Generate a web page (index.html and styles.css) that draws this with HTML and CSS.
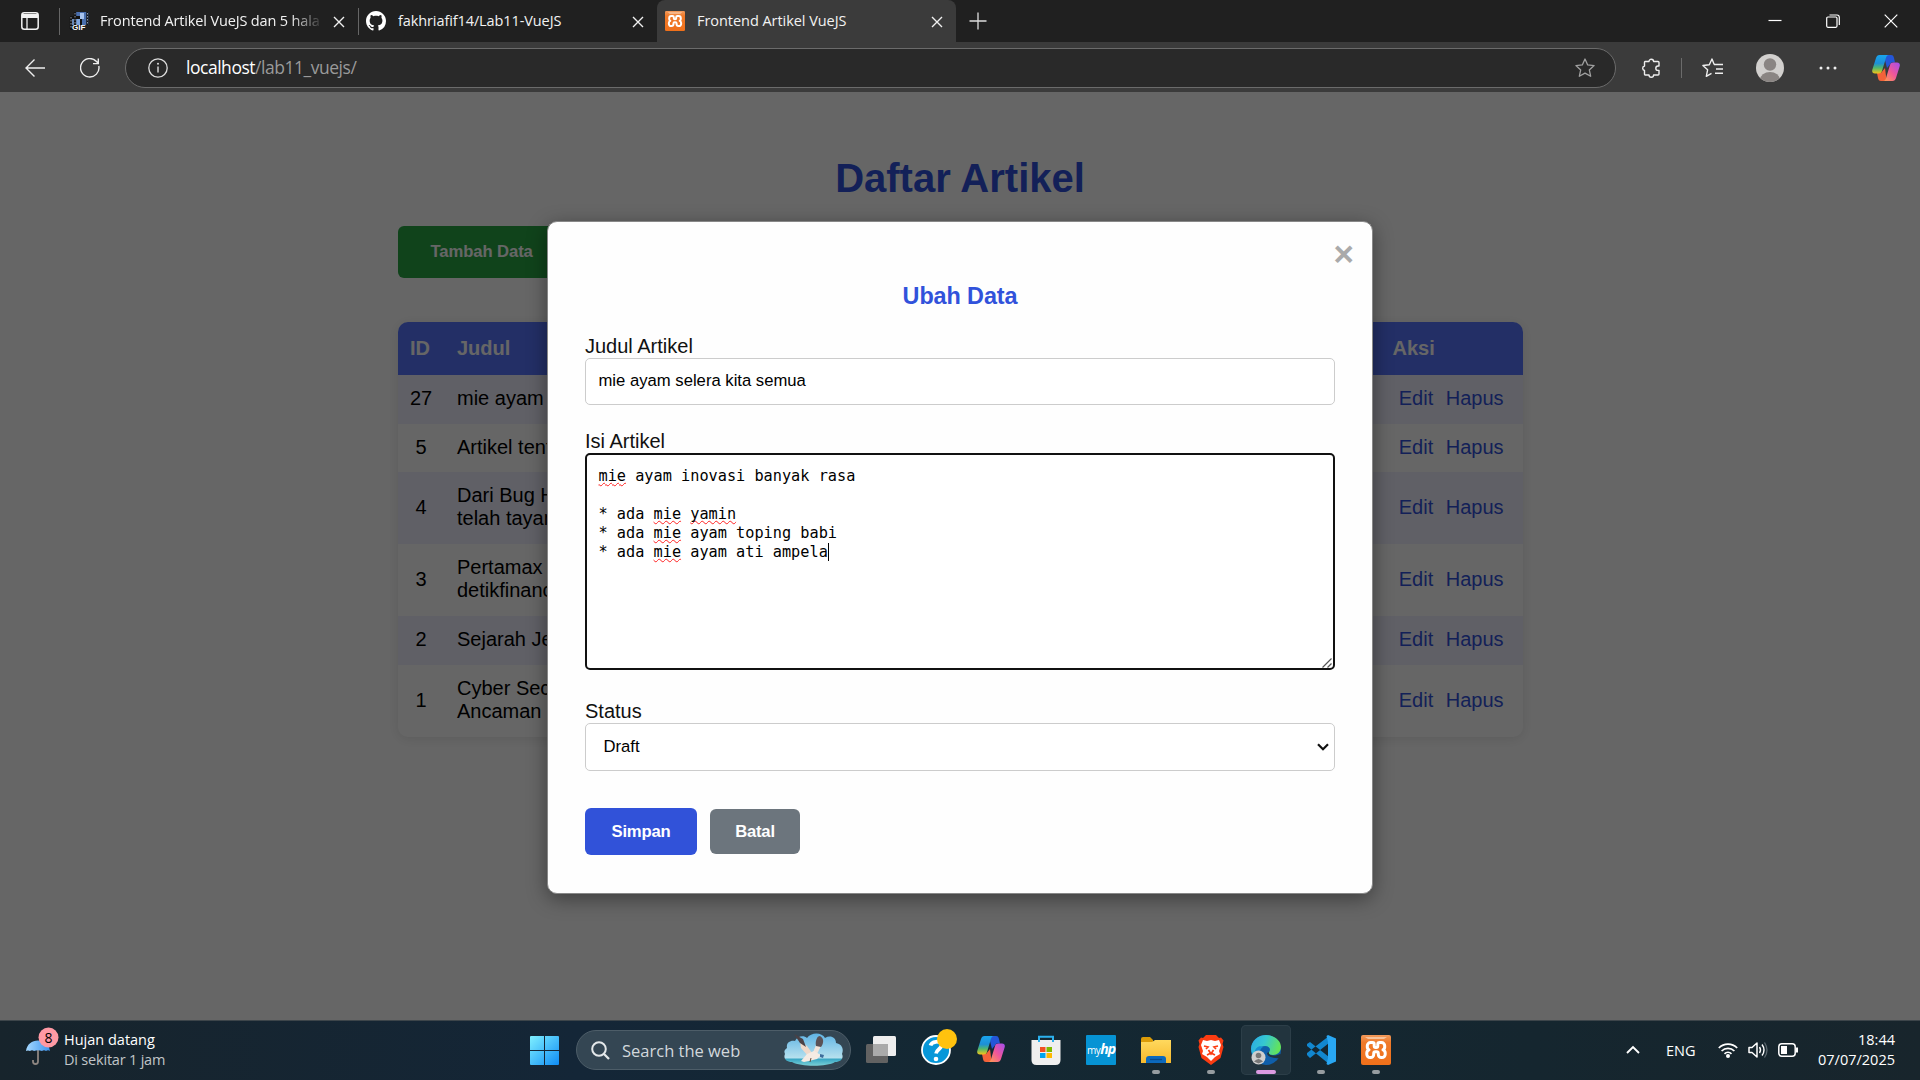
FILE: index.html
```html
<!DOCTYPE html>
<html lang="id">
<head>
<meta charset="utf-8">
<title>Frontend Artikel VueJS</title>
<link rel="stylesheet" href="styles.css">
</head>
<body>
<svg class="defs" width="0" height="0" aria-hidden="true">
  <defs>
    <linearGradient id="cpA" x1="0" y1="0" x2="0" y2="1"><stop offset="0" stop-color="#19a5ee"/><stop offset=".45" stop-color="#1d8fd6"/><stop offset=".7" stop-color="#52b86a"/><stop offset="1" stop-color="#f5c518"/></linearGradient>
    <linearGradient id="cpB" x1="1" y1="0" x2="0" y2="1"><stop offset="0" stop-color="#a24df0"/><stop offset=".5" stop-color="#f0569a"/><stop offset="1" stop-color="#ffa24c"/></linearGradient>
    <linearGradient id="xam" x1="0" y1="0" x2="0" y2="1"><stop offset="0" stop-color="#f19a5c"/><stop offset=".25" stop-color="#ef7a2a"/><stop offset="1" stop-color="#f0701a"/></linearGradient>
    <linearGradient id="win" x1="0" y1="0" x2="1" y2="1"><stop offset="0" stop-color="#7ff0ff"/><stop offset="1" stop-color="#0f8cf5"/></linearGradient>
    <linearGradient id="fold" x1="0" y1="0" x2="0" y2="1"><stop offset="0" stop-color="#ffd95e"/><stop offset="1" stop-color="#f7b92c"/></linearGradient>
    <linearGradient id="edgeTop" x1="0" y1="0" x2="1" y2=".3"><stop offset="0" stop-color="#2aa8e8"/><stop offset=".5" stop-color="#36c7d0"/><stop offset="1" stop-color="#62e35c"/></linearGradient>
    <linearGradient id="umb" x1="0" y1="0" x2="1" y2="0"><stop offset="0" stop-color="#a5d8ff"/><stop offset="1" stop-color="#3b93ee"/></linearGradient>
    <linearGradient id="sky" x1="0" y1="0" x2="0" y2="1"><stop offset="0" stop-color="#5fb4e4"/><stop offset=".75" stop-color="#b5e0ee"/><stop offset=".8" stop-color="#3aa7c4"/><stop offset="1" stop-color="#7bd0d6"/></linearGradient>
    <symbol id="copilot" viewBox="0 0 28 28">
      <path d="M14 1h5c2 0 2.500 1 3 3l1 4.500h-3.500L15 14l-2-8z" fill="#2456d8"/>
      <path d="M14 27H9c-2 0-2.500-1-3-3l-1-5h4l4-5 1 8z" fill="#f4623a"/>
      <path d="M7.500 1H17c-2 0-2.600 1.500-3.200 3.500L10 17c-.6 1.800-1.600 2.500-3.500 2.500H3c-2.500 0-3.300-1.700-2.600-4L4 4C4.700 2 5.600 1 7.500 1z" fill="url(#cpA)"/>
      <path d="M20.500 27H11c2 0 2.600-1.500 3.200-3.500L18 11c.6-1.800 1.600-2.500 3.500-2.500H25c2.500 0 3.300 1.700 2.600 4L24 24c-.7 2-1.600 3-3.500 3z" fill="url(#cpB)"/>
    </symbol>
    <symbol id="xampp" viewBox="0 0 30 30">
      <rect width="30" height="30" rx="2" fill="url(#xam)"/>
      <path d="M4 2h22l-3 2H7z" fill="#f7c39c"/>
      <path d="M11.500 7.500H9.500a3.200 3.200 0 0 0-3.200 3.200v1a3.200 3.200 0 0 0 1.700 3.100 3.400 3.400 0 0 0-2.200 3.200v1.300a3.300 3.300 0 0 0 3.300 3.300h.6a3 3 0 0 0 3-3v-1.100c0-1 .7-1.700 1.700-1.700h1.200c1 0 1.700.7 1.700 1.700v1.100a3 3 0 0 0 3 3h.6a3.300 3.300 0 0 0 3.300-3.300V18a3.400 3.400 0 0 0-2.200-3.200 3.200 3.200 0 0 0 1.700-3.100v-1a3.200 3.200 0 0 0-3.200-3.200h-2c-1.200 0-1.700.8-1.700 1.800v1.500c0 1-.6 1.700-1.600 1.700h-.4c-1 0-1.600-.7-1.600-1.700V9.300c0-1-.5-1.800-1.700-1.800z" fill="none" stroke="#fff" stroke-width="3" stroke-linejoin="round"/>
    </symbol>
    <symbol id="cross" viewBox="0 0 12 12"><path d="M1 1l10 10M11 1L1 11" stroke="#f0f0f0" stroke-width="1.400" fill="none"/></symbol>
  </defs>
</svg>

<header class="tabstrip">
  <div class="tab-actions">
    <svg width="18" height="18" viewBox="0 0 18 18"><rect x=".8" y=".8" width="16.400" height="16.400" rx="2.500" fill="none" stroke="#f2f2f2" stroke-width="1.500"/><path d="M1 2h16v4H1z" fill="#f2f2f2"/><path d="M6 5v12" stroke="#f2f2f2" stroke-width="1.300"/></svg>
  </div>
  <div class="tab tab-first">
    <svg class="favicon" width="20" height="20" viewBox="0 0 20 20"><path d="M5 1h15v13H5z" fill="#4a6fae"/><path d="M1 5h12v14H1z" fill="#111"/><path d="M3 8h8v6H3z" fill="#7ea6df"/><path d="M11 2h4v6h-4z" fill="#a7c3ee"/><path d="M6 1v13M18.500 1v13M2 6v12" stroke="#111" stroke-width="2.400"/><path d="M6 2v12M18.500 2v12M2 6v12" stroke="#8a93a3" stroke-width="1" stroke-dasharray="1.500 1.500"/><text class="gif" x="3" y="19">GIF</text></svg>
    <span class="tab-title faded">Frontend Artikel VueJS dan 5 hala</span>
    <svg class="x" width="12" height="12"><use href="#cross"/></svg>
  </div>
  <div class="tab tab-second">
    <svg class="favicon" width="20" height="20" viewBox="0 0 16 16"><path fill="#fff" d="M8 0C3.580 0 0 3.580 0 8c0 3.540 2.290 6.530 5.470 7.590.4.070.55-.17.55-.38 0-.19-.01-.82-.01-1.490-2.010.37-2.530-.49-2.690-.94-.09-.23-.48-.94-.82-1.130-.28-.15-.68-.52-.01-.53.63-.01 1.080.58 1.230.82.72 1.210 1.870.87 2.330.66.07-.52.28-.87.51-1.070-1.780-.2-3.640-.89-3.640-3.950 0-.87.31-1.590.82-2.150-.08-.2-.36-1.020.08-2.120 0 0 .67-.21 2.200.82.64-.18 1.320-.27 2-.27s1.360.09 2 .27c1.530-1.040 2.200-.82 2.200-.82.44 1.100.16 1.920.08 2.120.51.56.82 1.270.82 2.150 0 3.070-1.870 3.750-3.650 3.950.29.25.54.73.54 1.480 0 1.070-.01 1.930-.01 2.200 0 .21.15.46.55.38A8 8 0 0 0 16 8c0-4.420-3.580-8-8-8z"/></svg>
    <span class="tab-title t2">fakhriafif14/Lab11-VueJS</span>
    <svg class="x" width="12" height="12"><use href="#cross"/></svg>
  </div>
  <div class="tab tab-active">
    <svg class="favicon" width="20" height="20"><use href="#xampp"/></svg>
    <span class="tab-title t3">Frontend Artikel VueJS</span>
    <svg class="x" width="12" height="12"><use href="#cross"/></svg>
  </div>
  <svg class="new-tab" width="18" height="18" viewBox="0 0 18 18"><path d="M9 .5v17M.5 9h17" stroke="#ddd" stroke-width="1.300"/></svg>
  <div class="window-controls">
    <svg width="14" height="14" viewBox="0 0 14 14"><path d="M.5 6.500h13" stroke="#fff" stroke-width="1.200"/></svg>
    <svg width="14" height="14" viewBox="0 0 14 14"><rect x=".7" y="3" width="10.300" height="10.300" rx="1.200" fill="none" stroke="#fff" stroke-width="1.200"/><path d="M3.500 1h7.500c1.500 0 2.300.8 2.300 2.300V11" fill="none" stroke="#fff" stroke-width="1.200"/></svg>
    <svg width="14" height="14" viewBox="0 0 14 14"><path d="M.7.7l12.600 12.600M13.300.7L.7 13.300" stroke="#fff" stroke-width="1.200"/></svg>
  </div>
</header>

<nav class="toolbar">
  <svg class="back" width="20" height="20" viewBox="0 0 20 20"><path d="M9.500 1.500L1 10l8.500 8.500M1 10h19" fill="none" stroke="#eee" stroke-width="1.400"/></svg>
  <svg class="reload" width="20" height="20" viewBox="0 0 20 20"><path d="M18.800 8A9.200 9.200 0 1 1 16.500 3.500L18 5M18.300.5V5.600H13" fill="none" stroke="#eee" stroke-width="1.400"/></svg>
  <div class="address">
    <svg width="20" height="20" viewBox="0 0 20 20"><circle cx="10" cy="10" r="9.200" fill="none" stroke="#ddd" stroke-width="1.300"/><path d="M10 8.500v6" stroke="#ddd" stroke-width="1.400"/><circle cx="10" cy="5.800" r="1" fill="#ddd"/></svg>
    <span class="url"><b>localhost</b>/lab11_vuejs/</span>
    <svg class="star" width="20" height="20" viewBox="0 0 20 20"><path d="M10 1l2.700 5.900 6.400.7-4.800 4.300 1.400 6.400L10 15.100l-5.700 3.200 1.400-6.400L.9 7.600l6.400-.7z" fill="none" stroke="#a0a0a0" stroke-width="1.300" stroke-linejoin="round"/></svg>
  </div>
  <svg class="ext" width="20" height="20" viewBox="0 0 20 20"><path d="M4 3.500h4a2.300 2.300 0 0 1 4.600 0H17a1 1 0 0 1 1 1V8h-1a2 2 0 0 0 0 4.400h1V16a1 1 0 0 1-1 1h-4.400a2.300 2.300 0 0 1-4.600 0H4.500a1 1 0 0 1-1-1v-3.500a2.300 2.300 0 0 1 0-4.500V4.500c0-.6.200-1 .5-1z" fill="none" stroke="#eee" stroke-width="1.400" stroke-linejoin="round"/></svg>
  <span class="bar-divider"></span>
  <svg class="fav" width="21" height="20" viewBox="0 0 21 20"><path d="M12 6.500H21M14 11h7M13 15.300h8" stroke="#eee" stroke-width="1.400"/><path d="M12.200 6.500L10 1 7.300 6.700.9 7.500l4.700 4.300-1.300 6.500 5.200-3M11.500 11" fill="none" stroke="#eee" stroke-width="1.400" stroke-linejoin="round"/></svg>
  <svg class="avatar" width="28" height="28" viewBox="0 0 28 28"><clipPath id="av"><circle cx="14" cy="14" r="14"/></clipPath><g clip-path="url(#av)"><path d="M0 0h28v28H0z" fill="#d2d0ce"/><circle cx="14" cy="10.500" r="6.200" fill="#8a8583"/><ellipse cx="14" cy="26" rx="10" ry="8" fill="#8a8583"/></g></svg>
  <svg class="dots" width="18" height="4" viewBox="0 0 18 4"><circle cx="2" cy="2" r="1.500" fill="#eee"/><circle cx="9" cy="2" r="1.500" fill="#eee"/><circle cx="16" cy="2" r="1.500" fill="#eee"/></svg>
  <svg class="copilot" width="28" height="28"><use href="#copilot"/></svg>
</nav>

<main class="page">
  <div class="container">
    <h1>Daftar Artikel</h1>
    <button class="btn-add">Tambah Data</button>
    <table class="articles">
      <thead><tr><th class="c">ID</th><th>Judul</th><th>Aksi</th></tr></thead>
      <tbody>
        <tr><td class="c">27</td><td>mie ayam</td><td><a>Edit</a><a>Hapus</a></td></tr>
        <tr class="short"><td class="c">5</td><td>Artikel tent</td><td><a>Edit</a><a>Hapus</a></td></tr>
        <tr class="tall"><td class="c">4</td><td>Dari Bug H<br>telah tayan</td><td><a>Edit</a><a>Hapus</a></td></tr>
        <tr class="tall"><td class="c">3</td><td>Pertamax<br>detikfinanc</td><td><a>Edit</a><a>Hapus</a></td></tr>
        <tr><td class="c">2</td><td>Sejarah Je</td><td><a>Edit</a><a>Hapus</a></td></tr>
        <tr class="tall"><td class="c">1</td><td>Cyber Sec<br>Ancaman</td><td><a>Edit</a><a>Hapus</a></td></tr>
      </tbody>
    </table>
  </div>
  <div class="overlay">
    <form class="modal">
      <span class="close">&times;</span>
      <h3>Ubah Data</h3>
      <label>Judul Artikel</label>
      <div class="field input">mie ayam selera kita semua</div>
      <label>Isi Artikel</label>
      <div class="field textarea">
        <div class="copy">
          <div class="line"><u>mie</u><span> ayam inovasi banyak rasa</span></div>
          <div class="line"></div>
          <div class="line"><span>* ada </span><u>mie</u><span> </span><u>yamin</u></div>
          <div class="line"><span>* ada </span><u>mie</u><span> ayam toping babi</span></div>
          <div class="line"><span>* ada </span><u>mie</u><span> ayam ati ampela</span><i class="caret"></i></div>
        </div>
        <svg class="grip" width="10" height="10" viewBox="0 0 10 10"><path d="M.5 9.500l9-9M5.500 9.500l4-4" stroke="#555" stroke-width="1.200"/></svg>
      </div>
      <label>Status</label>
      <div class="field select"><span>Draft</span><svg width="12" height="8" viewBox="0 0 12 8"><path d="M1 1.200l5 5 5-5" fill="none" stroke="#111" stroke-width="2.200"/></svg></div>
      <div class="actions"><button type="button" class="save">Simpan</button><button type="button" class="cancel">Batal</button></div>
    </form>
  </div>
</main>

<footer class="taskbar">
  <div class="weather">
    <svg width="38" height="40" viewBox="0 0 38 40"><path d="M12 23v11.500a2.500 2.500 0 0 1-5 0V33" fill="none" stroke="#8d8580" stroke-width="1.800"/><path d="M0 24C1 17 6 13.500 12 13.500S23 17 24 24q-2-1.500-4 0-2-1.500-4 0-4-1.500-8 0-2-1.500-4 0-2-1-4 0z" fill="url(#umb)"/><circle cx="22.500" cy="10.500" r="10" fill="#ff99a4"/><text class="badge" x="22.500" y="15.500">8</text></svg>
    <div class="weather-text"><span class="w1">Hujan datang</span><span class="w2">Di sekitar 1 jam</span></div>
  </div>
  <svg class="start" width="29" height="29" viewBox="0 0 29 29"><path d="M0 1q0-1 1-1h13v14H0zM15 0h13q1 0 1 1v13H15zM0 15h14v14H1q-1 0-1-1zM15 15h14v13q0 1-1 1H15z" fill="url(#win)"/></svg>
  <div class="search">
    <svg width="19" height="19" viewBox="0 0 19 19"><circle cx="8" cy="8" r="6.800" fill="none" stroke="#e4e8ea" stroke-width="2"/><path d="M13 13l5 5" stroke="#e4e8ea" stroke-width="2.300"/></svg>
    <span>Search the web</span>
    <svg class="gull" width="60" height="34" viewBox="0 0 60 34"><path d="M3 15c-1-5 3-8 8-7 2-5 9-6 12-3 4-6 15-6 18 0 5-3 11-1 11 5 6 1 8 6 6 11 2 4-1 8-7 8-8 5-34 5-43 0-6 0-9-4-7-8-1-2-1-4 2-6z" fill="url(#sky)"/><path d="M16 8l7 5 5 7-4 3-7-8z" fill="#efd9ca"/><path d="M10 1l9 5 3 8-6-4z" fill="#4b4145"/><path d="M32 12l5 1-4 8-5 1z" fill="#f3e4da"/><path d="M32 13c-1-5 1-10 4-10 4 2 4 7 1 11z" fill="#5b5256"/><path d="M17 28l6-7 7-3 5 3 2 1-4 4-8 2-5 1z" fill="#f5ebe3"/><path d="M36 21l4 1-1 3-3-1z" fill="#3f6e9c"/><path d="M27 25l-1 4" stroke="#684b3a"/></svg>
  </div>
  <div class="apps">
    <div class="app"><svg width="30" height="30" viewBox="0 0 30 30"><rect x="0" y="9" width="22" height="19" rx="1.500" fill="#626262"/><rect x="7" y="1" width="23" height="20" rx="1.500" fill="#eee"/><path d="M7 9h15v12H7z" fill="#aaa"/></svg></div>
    <div class="app"><svg class="over" width="30" height="30" viewBox="0 0 30 30"><circle cx="15" cy="15" r="14" fill="#0797d9" stroke="#fff" stroke-width="1.800"/><path d="M9.500 10.500c1-4 9.500-5.500 11-1 1 4-5 4.500-5.500 9" fill="none" stroke="#fff" stroke-width="3.700"/><circle cx="15" cy="24" r="2.300" fill="#fff"/><circle cx="26" cy="4" r="10" fill="#ffc20e"/></svg></div>
    <div class="app"><svg width="28" height="28"><use href="#copilot"/></svg></div>
    <div class="app"><svg width="30" height="30" viewBox="0 0 30 30"><path d="M8 7V1.700h14V7" fill="none" stroke="#2bb1ee" stroke-width="2"/><path d="M.5 5h29v20q0 5-5 5h-19q-5 0-5-5z" fill="#efefef"/><path d="M8 5v2M22 5v2" stroke="#2bb1ee" stroke-width="2"/><path d="M9 12h5.500v5H9z" fill="#f25022"/><path d="M15.500 12H21v5h-5.500z" fill="#7fba00"/><path d="M9 18h5.500v5H9z" fill="#00a4ef"/><path d="M15.500 18H21v5h-5.500z" fill="#ffb900"/></svg></div>
    <div class="app"><span class="myhp"><small>my</small>hp</span></div>
    <div class="app"><svg width="30" height="30" viewBox="0 0 30 30"><path d="M0 4q0-2 2-2h7l3 3v6H0z" fill="#dc9c08"/><path d="M0 7h11l3-2h16v23H0z" fill="url(#fold)"/><path d="M5 28v-4q0-3 3-3h14q3 0 3 3v4z" fill="#0c69bd"/><path d="M9 24.500h12" stroke="#084a8c" stroke-width="1.300"/></svg><i class="dot"></i></div>
    <div class="app"><svg width="26" height="30" viewBox="0 0 26 30"><path d="M8 0h10l3 3 2-.5 2.500 3L24.500 9l1 3-3 11-9.500 7-9.500-7-3-11 1-3L.5 5.500 3 2.500l2 .5z" fill="#fb3c12"/><path d="M13 5l4 1 4-1 2 5-2 6 1 3-5 3-4 4-4-4-5-3 1-3-2-6 2-5 4 1z" fill="#fff"/><path d="M6 11l4 1-2 2M20 11l-4 1 2 2M10.500 15L13 19l2.500-4M9 20l4-2 4 2" fill="none" stroke="#fb3c12" stroke-width="1.700"/></svg><i class="dot"></i></div>
    <div class="app current"><svg width="30" height="30" viewBox="0 0 30 30"><circle cx="15" cy="15" r="15" fill="#0f5ea9"/><path d="M0 14C0 6 7 0 15 0c9 0 15 6 15 12 0 5-4 8-8 8-3 0-5-1-4-3 2-2 1-6-4-6-6 0-9 5-8 12-4-2-6-5-6-9z" fill="url(#edgeTop)"/><path d="M12 12c-4 2-5 10 2 14-7 0-11-4-10-9 0-4 4-7 8-5z" fill="#178fd2"/><path d="M18 17c-1 3 4 5 11 2l2 1-1 3c-7 1-14-1-14-5z" fill="#22343e"/><circle cx="7.500" cy="22.500" r="7" fill="#cfcfcf"/><circle cx="7.500" cy="20.500" r="2.800" fill="#777"/><path d="M3 26.500q4.500-5 9 0l-4.500 2z" fill="#777"/></svg><i class="dot"></i></div>
    <div class="app"><svg width="30" height="30" viewBox="0 0 30 30"><path d="M1 9l3-2 19 15v7L1 11zM1 20l3 3L23 8V1L1 18z" fill="#1287cf"/><path d="M22 0l8 3.500v23L22 30l-1.500-1L22 23V7l-1.500-6z" fill="#29a7f3"/></svg><i class="dot"></i></div>
    <div class="app"><svg width="30" height="30"><use href="#xampp"/></svg><i class="dot"></i></div>
  </div>
  <div class="tray">
    <svg class="chev" width="14" height="9" viewBox="0 0 14 9"><path d="M1 8l6-6 6 6" fill="none" stroke="#fff" stroke-width="1.900"/></svg>
    <span class="lang">ENG</span>
    <svg class="wifi" width="20" height="16" viewBox="0 0 20 16"><path d="M.8 6a13 13 0 0 1 18.400 0M3.600 9a9 9 0 0 1 12.800 0M6.500 11.800a5 5 0 0 1 7 0" fill="none" stroke="#fff" stroke-width="1.700"/><circle cx="10" cy="14" r="2" fill="#fff"/></svg>
    <svg class="vol" width="20" height="18" viewBox="0 0 20 18"><path d="M1 6.500h3L9 2v14l-5-4.500H1z" fill="none" stroke="#fff" stroke-width="1.500" stroke-linejoin="round"/><path d="M11.500 6q2 3 0 6M14 3.500q4 5.500 0 11" fill="none" stroke="#fff" stroke-width="1.400"/><path d="M16.500 1.500q5 7.500 0 15" fill="none" stroke="#5c686f" stroke-width="1.300"/></svg>
    <svg class="bat" width="20" height="14" viewBox="0 0 20 14"><rect x=".8" y=".8" width="16.400" height="12.400" rx="3" fill="none" stroke="#fff" stroke-width="1.500"/><path d="M3 3h6v8H3zM18 4.500h2v5h-2z" fill="#fff"/></svg>
    <div class="clock"><span class="time">18:44</span><span class="date">07/07/2025</span></div>
  </div>
</footer>
</body>
</html>
```
FILE: styles.css
```css
* { box-sizing: border-box; }
html, body { margin: 0; height: 100%; overflow: hidden; }
body {
  display: flex;
  flex-direction: column;
  width: 1920px;
  height: 1080px;
  font-family: "Liberation Sans", Arial, sans-serif;
}
svg { display: block; flex: none; }
.defs { position: absolute; }

/* Tab strip */
.tabstrip, .toolbar, .taskbar { font-family: "Open Sans", "Noto Sans", sans-serif; white-space: nowrap; }
.tabstrip {
  display: flex;
  align-items: stretch;
  flex: none;
  height: 42px;
  background: #202020;
  color: #f2f2f2;
}
.tab-actions { width: 59px; padding: 12px 0 0 21px; }
.tab { display: flex; padding-top: 11px; font-size: 14.500px; line-height: 19px; }
.tab-first { width: 299px; padding-left: 9px; border-left: 1px solid #5a5a5a; border-image: linear-gradient(transparent 9px, #666 9px, #666 34px, transparent 34px) 1; }
.tab-second { width: 299px; padding-left: 7px; border-left: 1px solid #5a5a5a; border-image: linear-gradient(transparent 9px, #666 9px, #666 34px, transparent 34px) 1; }
.tab-active { width: 299px; padding-left: 8px; background: #3b3b3b; border-radius: 8px 8px 0 0; }
.tab-title { margin-left: 11px; width: 224px; overflow: hidden; letter-spacing: -.1px; }
.faded { letter-spacing: -.15px; }
.t2 { margin-left: 12px; width: 234px; }
.t3 { margin-left: 12px; width: 234px; letter-spacing: -.05px; }
.faded { -webkit-mask-image: linear-gradient(90deg, #000 85%, transparent); mask-image: linear-gradient(90deg, #000 85%, transparent); }
.x { margin-top: 5px; }
.tab-first .x { margin-left: 9px; }
.gif { font: bold 8px "Liberation Sans", sans-serif; fill: #fff; }
.new-tab { margin: 12px 0 0 13px; }
.window-controls { display: flex; gap: 44px; margin: 14px 22px 0 auto; }

/* Toolbar */
.toolbar { display: flex; align-items: center; flex: none; height: 50px; padding-left: 25px; background: #3b3b3b; padding-top: 2px; }
.reload { margin-left: 35px; }
.address {
  display: flex;
  align-items: center;
  width: 1491px;
  height: 40px;
  margin-left: 25px;
  padding: 0 20px 0 22px;
  border: 1px solid #6b6b6b;
  border-radius: 20px;
  background: #292929;
}
.url { margin: -2px 0 0 18px; color: #9a9a9a; font-size: 17.500px; letter-spacing: -.47px; }
.url b { color: #fff; font-weight: 400; }
.star { margin-left: auto; }
.ext { margin-left: 25px; }
.bar-divider { width: 1px; height: 20px; margin: 0 20px 0 20px; background: #6b6b6b; }
.avatar { margin-left: 33px; }
.dots { margin-left: 35px; }
.copilot { margin-left: 35px; }

/* Article list */
.page { position: relative; flex: none; height: 928px; background: #fff; overflow: hidden; }
.container { width: 1125px; margin: 0 auto; }
h1 { margin: 0; padding-top: 63px; line-height: 46px; font-size: 40px; text-align: center; color: #3152db; }
.btn-add {
  display: block;
  height: 52px;
  margin-top: 25px;
  padding: 0 33px;
  border: 0;
  border-radius: 6px;
  background: #28a745;
  color: #fff;
  font: bold 16.670px "Liberation Sans", Arial, sans-serif;
  letter-spacing: -.1px;
}
.articles {
  width: 1125px;
  margin-top: 44px;
  border-spacing: 0;
  border-radius: 10px;
  overflow: hidden;
  table-layout: fixed;
  box-shadow: 0 2px 12px rgba(0, 0, 0, .1);
  font-size: 20px;
  line-height: 23px;
}
th { height: 53px; background: #5777ff; color: #fff; }
th, td { padding: 0 12px; text-align: left; white-space: nowrap; }
th:nth-child(1) { width: 47px; }
th:nth-child(3) { width: 142px; }
th:nth-child(2), td:nth-child(2) { padding-left: 12.500px; }
.c { text-align: center; padding: 0; }
th.c { padding: 0 2px 0 0; }
td { height: 49px; padding-bottom: 2px; }
td.c { padding-bottom: 2px; }
.short td { height: 48px; }
.tall td { height: 72px; }
tbody tr:nth-child(odd) { background: #f1f0ff; }
a { margin: 0 6.250px; color: #3152db; }

/* Edit dialog */
.overlay { position: absolute; inset: 0; background: rgba(0, 0, 0, .6); }
.modal {
  width: 826px;
  height: 673px;
  margin: 129px auto 0;
  padding: 0 37px;
  border: 1px solid #888;
  border-radius: 10px;
  background: #fefefe;
  box-shadow: 0 5px 20px rgba(0, 0, 0, .4);
  font-size: 20px;
  color: #111;
}
.close { display: block; height: 61px; margin-right: -19px; padding-top: 12px; text-align: right; font-size: 35px; font-weight: 700; line-height: 40px; color: #aaa; }
h3 { margin: 0 0 25px; font-size: 23.400px; line-height: 27px; text-align: center; color: #3152db; letter-spacing: -.1px; }
label { display: block; height: 23px; line-height: 23px; }
.field { width: 750px; border: 1px solid #ccc; border-radius: 5px; background: #fff; color: #000; font-size: 16.670px; }
.input { height: 47px; margin-bottom: 25px; padding: 12px 12.500px; line-height: 20px; }
.textarea {
  display: flex;
  justify-content: space-between;
  height: 217px;
  margin-bottom: 30px;
  padding: 12px 1px 0 11.500px;
  border: 2px solid #111;
  font-family: "DejaVu Sans Mono", monospace;
  font-size: 15.240px;
  line-height: 19px;
}
.line { display: flex; height: 19px; white-space: pre; }
u { text-decoration: underline wavy #f22 1.200px; text-underline-offset: 1px; text-decoration-skip-ink: none; }
.caret { width: 1px; height: 18px; background: #000; }
.grip { align-self: flex-end; }
.select { display: flex; align-items: center; justify-content: space-between; height: 48px; margin-bottom: 37px; padding: 0 5px 1px 17.500px; }
.actions { display: flex; align-items: center; gap: 13px; height: 47px; }
.actions button { border: 0; border-radius: 6px; color: #fff; font: bold 16.670px "Liberation Sans", Arial, sans-serif; letter-spacing: -.2px; }
.save { width: 112px; height: 47px; background: #3152d9; }
.actions .cancel { width: 90px; height: 45px; background: #6c757d; }

/* Taskbar */
.taskbar {
  display: flex;
  flex: none;
  height: 60px;
  border-top: 1px solid #3d454a;
  background: linear-gradient(90deg, #17242c, #142637 30%, #142833 50%, #15262f 80%, #18252c);
  color: #fff;
}
.weather { display: flex; width: 530px; padding: 6px 0 0 26px; }
.badge { font-size: 14px; fill: #000; text-anchor: middle; }
.weather-text, .clock { display: flex; flex-direction: column; font-size: 14.500px; line-height: 20px; }
.weather-text { padding-top: 3px; letter-spacing: -.2px; }
.w1 { letter-spacing: 0; }
.w2 { color: #c0c5c8; }
.start { margin-top: 15px; }
.search {
  display: flex;
  align-items: center;
  width: 275px;
  height: 40px;
  margin: 9px 2px 0 17px;
  padding: 0 6px 0 14px;
  border: 1px solid #4d5d68;
  border-radius: 20px;
  background: #344653;
  color: #d2d8dc;
  font-size: 16.500px;
}
.search span { margin-left: 12px; }
.gull { margin-left: auto; }
.apps { display: flex; gap: 5px; padding: 4px 0 0 3px; }
.app { display: flex; flex-direction: column; align-items: center; justify-content: space-between; width: 50px; height: 50px; padding: 10px 0 1px; border: 0; border-radius: 5px; }
.current { background: #22343e; box-shadow: inset 0 0 0 1px #2c3e48; }
.over { overflow: visible; }
.dot { width: 8px; height: 4px; border-radius: 2px; background: #969ca0; }
.current .dot { width: 20px; background: #dc9be2; }
.myhp { width: 30px; height: 30px; background: #0693d4; font: italic bold 14px/28px "Open Sans", sans-serif; text-align: center; letter-spacing: -1px; border-radius: 1px; }
.myhp small { font: 10px "Open Sans", sans-serif; letter-spacing: -.5px; }
.tray { display: flex; margin-left: auto; padding-right: 25px; }
.chev { margin-top: 24px; }
.lang { width: 30px; margin: 20px 0 0 26px; font-size: 14.500px; line-height: 20px; }
.wifi { margin: 21px 0 0 22px; }
.vol { margin: 20px 0 0 10px; }
.bat { margin: 22px 0 0 10px; }
.clock { width: 97px; padding-top: 9px; align-items: flex-end; }
```
